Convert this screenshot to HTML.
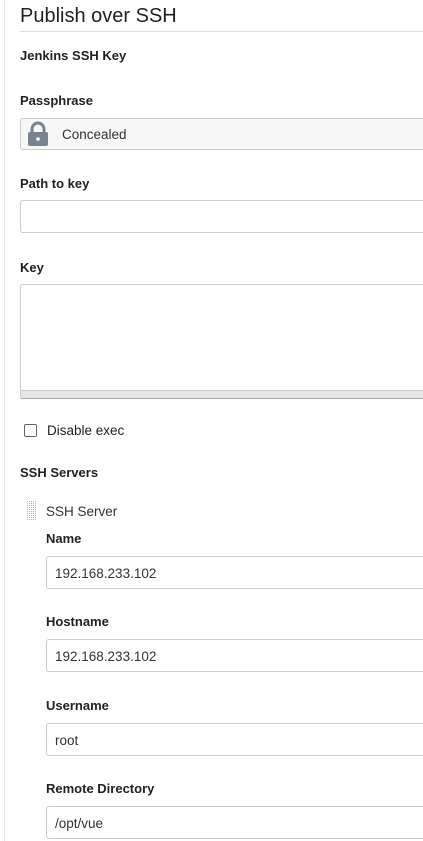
<!DOCTYPE html>
<html><head><meta charset="utf-8"><style>
html,body{margin:0;padding:0;background:#fff;width:423px;height:841px;overflow:hidden;font-family:"Liberation Sans",Arial,sans-serif;color:#333}
.vl{position:absolute;left:4px;top:0;width:1px;height:841px;background:#e4e8ec}
.a{position:absolute}
h1{position:absolute;left:20px;top:5px;margin:0;font-size:20px;font-weight:normal;color:#222}
.hr{left:20px;top:31px;width:403px;height:1px;background:#ddd}
.lb{font-size:13px;font-weight:bold;color:#222}
.in{border:1px solid #ccc;border-right:none;border-radius:3px 0 0 3px;background:#fff;box-sizing:border-box;font-size:13.5px;color:#333;padding-left:8px;line-height:34px}
</style></head><body>
<div class="vl"></div>
<h1>Publish over SSH</h1>
<div class="a hr"></div>
<div class="a lb" style="left:20px;top:48px">Jenkins SSH Key</div>
<div class="a lb" style="left:20px;top:93px">Passphrase</div>
<div class="a in" style="left:20px;top:118px;width:403px;height:32px;background:#f7f7f7;padding-left:41px;line-height:32px">Concealed</div>
<svg class="a" style="left:27px;top:121px" width="22" height="26" viewBox="0 0 22 26"><path d="M5 11V8a6 6 0 0 1 12 0v3" fill="none" stroke="#7a8290" stroke-width="3"/><rect x="1" y="11" width="20" height="14" rx="2" fill="#7a8290"/><circle cx="11" cy="18" r="1.8" fill="#fff"/></svg>
<div class="a lb" style="left:20px;top:176px">Path to key</div>
<div class="a in" style="left:20px;top:200px;width:403px;height:33px"></div>
<div class="a lb" style="left:20px;top:260px">Key</div>
<div class="a in" style="left:20px;top:284px;width:403px;height:114px;border-radius:3px 0 0 0"></div>
<div class="a" style="left:21px;top:390px;width:402px;height:7px;background:#e6e6e6;border-top:1px solid #ccc;border-bottom:1px solid #aaa"></div>
<div class="a" style="left:24px;top:424px;width:11px;height:11px;border:1px solid #666;border-radius:2px"></div>
<div class="a" style="left:47px;top:423px;font-size:13.5px;color:#222">Disable exec</div>
<div class="a lb" style="left:20px;top:465px">SSH Servers</div>
<svg class="a" style="left:27px;top:501px" width="10" height="19"><defs><pattern id="p" width="2" height="2" patternUnits="userSpaceOnUse"><rect width="1" height="1" fill="#b8b8b8"/></pattern></defs><rect width="10" height="19" fill="url(#p)"/></svg>
<div class="a" style="left:46px;top:504px;font-size:13.5px;color:#333">SSH Server</div>
<div class="a lb" style="left:46px;top:531px">Name</div>
<div class="a in" style="left:46px;top:556px;width:377px;height:33px">192.168.233.102</div>
<div class="a lb" style="left:46px;top:614px">Hostname</div>
<div class="a in" style="left:46px;top:639px;width:377px;height:33px">192.168.233.102</div>
<div class="a lb" style="left:46px;top:698px">Username</div>
<div class="a in" style="left:46px;top:723px;width:377px;height:33px">root</div>
<div class="a lb" style="left:46px;top:781px">Remote Directory</div>
<div class="a in" style="left:46px;top:806px;width:377px;height:33px">/opt/vue</div>
</body></html>
